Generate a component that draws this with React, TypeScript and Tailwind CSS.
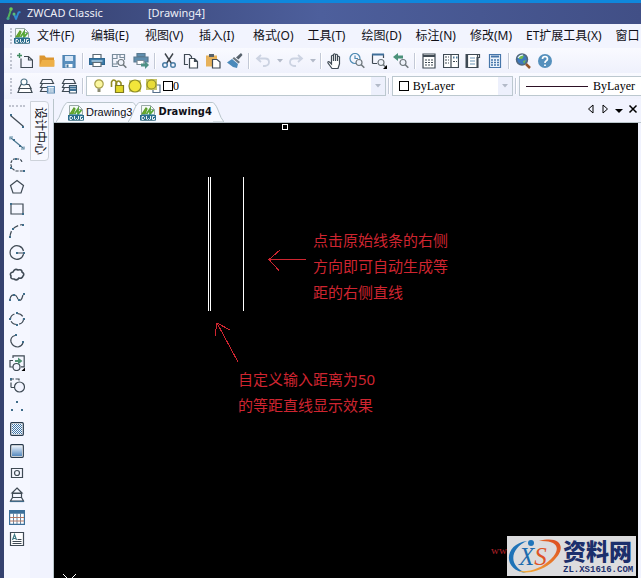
import type { ReactNode } from 'react'

type IconProps = { children: ReactNode; size?: string }

function Icon({ children, size = 'h-4 w-4' }: IconProps) {
  return (
    <svg
      viewBox="0 0 16 16"
      className={`${size} shrink-0`}
      fill="none"
      stroke="#3f4a54"
      strokeWidth="1.2"
      aria-hidden="true"
    >
      {children}
    </svg>
  )
}

function Node({ x, y }: { x: number; y: number }) {
  return <rect x={x - 1} y={y - 1} width="2" height="2" fill="#3f6d8a" stroke="none" />
}

function DwgIcon() {
  return (
    <Icon>
      <path d="M1.5 .5h9l4 4v11h-13z" fill="#f4faf6" stroke="#9aa9a8" strokeWidth="1" />
      <path d="M10.500 .5v4h4" stroke="#9aa9a8" strokeWidth="1" />
      <path d="M2 9 6 3l1 1-2 5z" fill="#6fae2c" stroke="#5c9c2d" />
      <path d="M6.500 9 10 4v5l3.500-4" stroke="#55a636" strokeWidth="1.800" />
      <path d="M2 10h12" stroke="#2d7fa0" />
      <rect x="0" y="10" width="16" height="5.500" fill="#2a6c8c" stroke="none" />
      <path
        d="M2 11.500v3h1.500l1-1v-1l-1-1zM6.500 11v3l1 .5 1-1 1 1 1-.5v-3M14.500 11.500h-2v3h2v-1.500"
        stroke="#fff"
        strokeWidth=".9"
      />
    </Icon>
  )
}

const printer = (
  <>
    <path d="M4 1.500h8v4H4z" fill="#fff" stroke="#5b6a75" />
    <path d="M.5 5.500h15v6H.5z" fill="#3d7ba8" stroke="#2e6791" />
    <path d="M2.500 8h11" stroke="#cfe2ef" />
    <path d="M4 9.500h8v4H4z" fill="#fff" stroke="#5b6a75" />
  </>
)

const glass = (
  <>
    <circle cx="10" cy="9.500" r="3" fill="#eef2fa" stroke="#6f777d" />
    <path d="m12.300 11.800 3 3" stroke="#6f777d" strokeWidth="1.600" />
  </>
)

const corner = <path d="M16 12v4h-4z" fill="#000" stroke="none" />

type Tool = { label: string; icon: ReactNode }

const fileTools: Tool[] = [
  {
    label: '新建',
    icon: (
      <>
        <path d="M4 5.500v9h11.500V7l-4-3.500H7M11.500 3.500V7h4" />
        <path d="M2.500 0v5M0 2.500h5" stroke="#3f8b60" strokeWidth="1.400" />
      </>
    ),
  },
  {
    label: '打开',
    icon: (
      <>
        <path d="M.5 2.500h5l1.500 2h8v9H.5z" fill="#dc9630" stroke="none" />
        <path d="M.5 13.500 3 7h12.500v6.500z" fill="#eeb047" stroke="none" />
      </>
    ),
  },
  {
    label: '保存',
    icon: (
      <>
        <path d="M2 2.500h12v12H2z" fill="#5a8fbd" stroke="#4d83b1" />
        <path d="M4 3h8v5H4z" fill="#d6e6f6" stroke="none" />
        <path d="M4.500 11h7v3.500h-7z" fill="#fff" stroke="none" />
        <path d="M5.500 11.500h2v3h-2z" fill="#47779e" stroke="none" />
      </>
    ),
  },
]

const printTools: Tool[] = [
  { label: '打印', icon: printer },
  {
    label: '打印预览',
    icon: (
      <>
        <path d="M1.500 14V1.500h12V7M1.500 5.500H6v-4M6 8v3H1.500M9 1.500v3h4M1.500 13.500H7" stroke="#7a8d9c" />
        {glass}
      </>
    ),
  },
  {
    label: '发布',
    icon: (
      <>
        <path d="M4 .5h8v3H4zM1 4h14v5H1z" fill="#5f8eae" stroke="#5a7b91" />
        <path d="M4 7.500h7v4H4z" fill="#fff" stroke="#7c8b96" />
        <path d="M8 10.500h4V8l4 4-4 4v-2.500H8z" fill="#4f9185" stroke="none" />
      </>
    ),
  },
]

const editTools: Tool[] = [
  {
    label: '剪切',
    icon: (
      <>
        <path d="m4 .5 6.500 10M12 .5l-6.500 10" stroke="#3d444a" strokeWidth="1.400" />
        <circle cx="4" cy="12" r="2.300" stroke="#4c7ea5" strokeWidth="1.500" />
        <circle cx="12" cy="12" r="2.300" stroke="#4c7ea5" strokeWidth="1.500" />
      </>
    ),
  },
  {
    label: '复制',
    icon: (
      <>
        <path d="M5 11.500H1.500v-10h5l2 2V5" />
        <path d="M6.500 5.500h5l3 3v6.500h-8zM11.500 5.500v3h3" fill="#fff" />
      </>
    ),
  },
  {
    label: '粘贴',
    icon: (
      <>
        <path d="M1 2.500h11v11H1z" fill="#e7b25b" stroke="none" />
        <path d="M4 1h5v3H4z" fill="#56616b" stroke="none" />
        <path d="M7.500 6.500h4.500l3 2.500v6h-7.500z" fill="#fff" />
      </>
    ),
  },
  {
    label: '格式刷',
    icon: (
      <>
        <path d="m14 0 1.500 2-4 4.500L9 4.500z" fill="#56616b" stroke="none" />
        <path d="m7 4 6 5-1.500 1.500-6-5z" fill="#6b7882" stroke="none" />
        <path d="M5 6 0 9.500 6 14l4 1 1-4z" fill="#4b8abb" stroke="none" />
      </>
    ),
  },
]

const undo = <path d="M6 2 2 5.500 6 9M2.500 5.500H10q4 0 4 3.500t-4 4H8" stroke="#ccd3e2" strokeWidth="1.800" />
const redo = <path d="m10 2 4 3.500L10 9m3.500-3.500H6q-4 0-4 3.500t4 4h2" stroke="#ccd3e2" strokeWidth="1.800" />

const viewTools: Tool[] = [
  {
    label: '实时平移',
    icon: (
      <path
        d="M5 15.500 1 10q-.5-2 1.500-1L4.500 11V3q1-1.500 2 0v5V1.500q1-1.500 2 0V8 2q1-1.500 2 0v6V4q1-1.500 2 0v7l-1.500 4.500z"
        fill="#fff"
      />
    ),
  },
  {
    label: '实时缩放',
    icon: (
      <>
        <circle cx="6" cy="5.500" r="5" stroke="#4e8bb4" />
        <path d="M6 2.500v3h3" stroke="#4e8bb4" />
        {glass}
      </>
    ),
  },
  {
    label: '窗口缩放',
    icon: (
      <>
        <path d="M1.500 10.500v-9h11V5M1.500 10.500H6" />
        <path d="M1 1.500h12" stroke="#3f6f9b" strokeWidth="2" />
        {glass}
        {corner}
      </>
    ),
  },
  {
    label: '缩放上一个',
    icon: (
      <>
        <path d="M0 4 5 0v2.500h5v3H5V8z" fill="#4b927a" stroke="none" />
        {glass}
      </>
    ),
  },
]

const paletteTools: Tool[] = [
  {
    label: '特性',
    icon: (
      <>
        <path d="M2 1h12v14H2z" fill="#fff" />
        <path d="M2 3h12" strokeWidth="2" />
        <path d="M4 7h8M4 9.500h8M4 12h8" strokeDasharray="2 1" />
      </>
    ),
  },
  {
    label: '设计中心',
    icon: (
      <>
        <path d="M.5 1.500h15v13H.5zM8 1.500v13" fill="#fff" />
        <path d="M2 4h4M2 7h4M2 10h4M10 8.500h4" strokeDasharray="2 1" />
        <path d="M10 3.500h1.500v2H10zM13 3.500h1.500v2H13z" fill="#4b7899" stroke="none" />
      </>
    ),
  },
  {
    label: '工具选项板',
    icon: (
      <>
        <path d="M2.500 1.500h10v13h-10zM12.500 1.500h2v3h-2" fill="#fff" />
        <path d="M1.500 1v14M12.500 4v11" strokeWidth="2" />
        <path d="M5 5h5M5 8h5M5 11h5" stroke="#6b93b5" />
      </>
    ),
  },
  {
    label: '计算器',
    icon: (
      <>
        <path d="M2.500 1.500h11v13h-11z" fill="#edf4fc" stroke="#4676aa" />
        <path d="M4 3.500h8" stroke="#4676aa" strokeWidth="2" />
        <path d="M4 7h8M4 9.500h8M4 12h8" stroke="#4676aa" strokeWidth="1.500" strokeDasharray="2 1" />
      </>
    ),
  },
]

const helpTools: Tool[] = [
  {
    label: '查找',
    icon: (
      <>
        <circle cx="7" cy="6.500" r="5.500" fill="#3d78bd" stroke="#52687d" strokeWidth="1.500" />
        <path d="M4 3q3-2 5 0L7 6H4zM8 8l3-1-2 4z" fill="#6eb852" stroke="none" />
        <path d="M3 5q2-3 5-3" stroke="#e5f4ff" />
        <path d="m11 11 4 4" stroke="#95542a" strokeWidth="2.500" />
      </>
    ),
  },
  {
    label: '帮助',
    icon: (
      <>
        <circle cx="8" cy="8" r="7" fill="#5590bd" stroke="none" />
        <path d="M5.500 6q0-2.500 2.500-2.500T10.500 6Q10.500 7 9 8 8 8.500 8 10m0 1.500v1.500" stroke="#fff" strokeWidth="1.700" />
      </>
    ),
  },
]

const stack = <path d="M4 6.500h8l2 4H2zM2.500 10.500 1 14.500h14l-1.500-4" fill="#fff" />
const layers = (
  <path d="M3.500 1.500h9l2 4h-13zM3.500 5.500l-2 4H8M3.500 9.500l-2 4H8" />
)

const layerTools: Tool[] = [
  {
    label: '图层特性',
    icon: (
      <>
        {stack}
        <circle cx="7" cy="4" r="3" fill="#fff" stroke="#4d7285" />
      </>
    ),
  },
  {
    label: '图层状态',
    icon: (
      <>
        {layers}
        <path d="M8.500 8.500h7v6.500h-7z" fill="#eaf3fb" stroke="#5d8ab2" />
        <path d="M9 11h6M9 13h6" stroke="#5d8ab2" strokeDasharray="1.500 .7" />
      </>
    ),
  },
  {
    label: '上一个图层',
    icon: (
      <>
        {layers}
        <path d="M8.500 7.500h7v7.500h-7z" fill="#fff" stroke="#3a5467" />
        <path d="M9 9.500h6M9 12h6" stroke="#3d6f95" strokeWidth="1.800" />
      </>
    ),
  },
]

const drawTools: Tool[] = [
  { label: '直线', icon: <><path d="m1.500 2.500 13 11" /><Node x={2} y={2} /><Node x={14} y={14} /></> },
  { label: '构造线', icon: <><path d="m2 3 12 10" stroke="#4b7891" /><path d="M1 4.500V2h3M15 11.500V14h-3" stroke="#5b87a0" /><Node x={5} y={5} /><Node x={11} y={11} /></> },
  { label: '多段线', icon: <><path d="M7 2H5Q1.500 4 2 8t5 6h8M7 2h2q3 0 4 3" strokeDasharray="3 1.200" /><Node x={7} y={2} /><Node x={2} y={11} /><Node x={15} y={14} /></> },
  { label: '正多边形', icon: <path d="m8 1.500 6.500 5-2.500 7.500H4L1.500 6.500z" /> },
  { label: '矩形', icon: <><path d="M2 3h12v10H2z" /><Node x={2} y={3} /><Node x={14} y={13} /></> },
  { label: '圆弧', icon: <><path d="M1 15q0-12 13-13.500" strokeDasharray="7 2" /><Node x={1} y={14} /><Node x={4} y={6} /><Node x={14} y={2} /></> },
  { label: '圆', icon: <><path d="M14.500 9A6.800 6.800 0 1 1 14.500 6M8 8h7" /><Node x={8} y={8} /><Node x={15} y={8} /></> },
  { label: '修订云线', icon: <path d="M4 5q2-4 5-2 4-1 4 2 3 2 1 4-1 3-4 2-2 3-5 1-4 0-3-3-2-3 2-4z" strokeWidth="1.600" /> },
  { label: '样条曲线', icon: <><path d="M1 10q1-5 5-4 1 0 3 4 3 4 5-4" /><Node x={1} y={11} /><Node x={5} y={6} /><Node x={10} y={11} /><Node x={15} y={5} /></> },
  { label: '椭圆', icon: <><ellipse cx="8" cy="8" rx="6.500" ry="5.500" strokeDasharray="7 2" /><Node x={8} y={2} /><Node x={1} y={8} /><Node x={15} y={8} /><Node x={8} y={14} /></> },
  { label: '椭圆弧', icon: <><path d="M6 2.500Q1 4 2 9q2 5 7 5 4-1 5-4" /><Node x={7} y={2} /><Node x={14} y={9} /></> },
  {
    label: '插入块',
    icon: (
      <>
        <path d="M4 3V.8h11.200v11H12M4 5.500H1v6.500h3" />
        <circle cx="7.500" cy="12" r="3.500" fill="#f3f5ff" />
        <path d="M6 5h3V2.500L13.500 6 9 9.500V7H6z" fill="#4f9172" stroke="none" />
        <path d="M16 12.500V16h-3.500z" fill="#000" stroke="none" />
      </>
    ),
  },
  { label: '创建块', icon: <><path d="M2 10.500V2h8v2M2 10.500h3" strokeDasharray="5 1.500" /><circle cx="10.500" cy="10" r="5" fill="#f3f5ff" /><Node x={2} y={2} /></> },
  { label: '点', icon: <><Node x={8} y={3} /><Node x={3} y={11} /><Node x={13} y={11} /></> },
  {
    label: '图案填充',
    icon: (
      <>
        <defs>
          <pattern id="checks" width="2" height="2" patternUnits="userSpaceOnUse">
            <path d="M0 0h1v1H0zM1 1h1v1H1z" fill="#3f75a5" stroke="none" shapeRendering="crispEdges" />
          </pattern>
        </defs>
        <rect x="1.700" y="1.700" width="12.600" height="12.600" rx="1" fill="#f8fbff" stroke="#26384a" />
        <path d="M3 3h10v10H3z" fill="url(#checks)" stroke="none" />
      </>
    ),
  },
  {
    label: '渐变色',
    icon: (
      <>
        <defs>
          <linearGradient id="fade" x2="0" y2="1">
            <stop stopColor="#e8f1fb" />
            <stop offset="1" stopColor="#5689be" />
          </linearGradient>
        </defs>
        <rect x="1.700" y="1.700" width="12.600" height="12.600" rx="1" fill="#fff" stroke="#26384a" />
        <path d="M3 3h10v10H3z" fill="url(#fade)" stroke="none" />
      </>
    ),
  },
  { label: '面域', icon: <><path d="M2.500 3.500h11v9h-11z" /><circle cx="8" cy="8" r="2.500" /></> },
  { label: '区域覆盖', icon: <><path d="m8 1 5 5H3zM3.500 6.500h9v4h-9zM3.500 10.500l-2 3.500h13l-2-3.500" /><path d="M1 14.500h14" stroke="#416b89" /></> },
  {
    label: '表格',
    icon: (
      <>
        <path d="M.6 1.600h14.800v13.800H.6z" fill="#fff" stroke="#3c709a" />
        <path d="M1 3h14" stroke="#3c709a" strokeWidth="3.500" />
        <path d="M4.500 4v11M8 4v11M11.500 4v11" stroke="#6584a0" strokeWidth="1" />
        <path d="M1 8.500h14M1 12h14" stroke="#b57862" strokeWidth="1" />
      </>
    ),
  },
  { label: '多行文字', icon: <><path d="M1.500 1.500h13v13h-13z" fill="#fff" /><path d="m3.500 9 2-5.500 2 5.500M4.500 7.500h2" stroke="#3f7a85" /><path d="M8.500 8.500h4M3.500 10.500h9M3.500 12.500h9" /></> },
]

const menus = [
  '文件(F)',
  '编辑(E)',
  '视图(V)',
  '插入(I)',
  '格式(O)',
  '工具(T)',
  '绘图(D)',
  '标注(N)',
  '修改(M)',
  'ET扩展工具(X)',
]

function ToolButton({ tool }: { tool: Tool }) {
  return (
    <button type="button" aria-label={tool.label} className="flex h-[22px] w-[22px] shrink-0 items-center justify-center">
      <Icon>{tool.icon}</Icon>
    </button>
  )
}

function ToolGroup({ tools }: { tools: Tool[] }) {
  return (
    <>
      {tools.map((tool) => (
        <ToolButton key={tool.label} tool={tool} />
      ))}
    </>
  )
}

function Separator() {
  return <div className="mx-[2px] h-4 w-[2px] shrink-0 border-l border-[#c3c9d6] bg-white" />
}

function Grip() {
  return <div className="ml-[6px] h-4 w-0 shrink-0 border-l-2 border-dotted border-[#c0c4d0]" />
}

function Caret({ color }: { color: string }) {
  return (
    <svg viewBox="0 0 6 4" className="h-1 w-1.5" aria-hidden="true">
      <path d="M0 0h6L3 3.500z" fill={color} />
    </svg>
  )
}

function HistoryButton({ label, icon }: { label: string; icon: ReactNode }) {
  return (
    <>
      <ToolButton tool={{ label, icon }} />
      <button type="button" aria-label={`${label}列表`} className="flex h-[22px] w-[11px] shrink-0 items-center justify-center">
        <Caret color="#b3bac8" />
      </button>
    </>
  )
}

type ComboProps = {
  label: string
  value: string
  className: string
  children: ReactNode
}

function Combo({ label, value, className, children }: ComboProps) {
  return (
    <label className={`flex h-5 items-center border border-[#bcc8cf] bg-white ${className}`}>
      {children}
      <select
        aria-label={label}
        className="h-full min-w-0 flex-1 appearance-none bg-transparent font-['Liberation_Serif','Noto_Sans_CJK_SC',serif] text-xs text-black outline-none"
      >
        <option>{value}</option>
      </select>
      <span className="flex h-full w-3.5 shrink-0 items-center justify-center bg-[#edf0fc]">
        <Caret color="#b3bac8" />
      </span>
    </label>
  )
}

function TabEdge({ side }: { side: 'left' | 'right' }) {
  return (
    <svg viewBox="0 0 12 20" className="h-5 w-3 shrink-0" fill="#f7f9ff" stroke="#b9c5cb" aria-hidden="true">
      {side === 'left' ? <path d="M0 20Q3 17 6 8 9 .5 12 .5V20" /> : <path d="M0 .5Q3 .5 6 8q3 9 6 12H0" />}
      {side === 'left' ? <path d="M12 1v19" stroke="#f7f9ff" strokeWidth="2" /> : <path d="M0 1v19" stroke="#f7f9ff" strokeWidth="2" />}
    </svg>
  )
}

function DrawingTab({ name, active }: { name: string; active?: boolean }) {
  return (
    <button type="button" role="tab" aria-selected={!!active} className={active ? '-ml-4 flex' : 'flex'}>
      <TabEdge side="left" />
      <span className="flex h-5 items-center gap-[2px] border-t border-[#b9c5cb] bg-[#f7f9ff]">
        <DwgIcon />
        <span
          className={
            active
              ? "font-['DejaVu_Sans_Condensed','Open_Sans',sans-serif] text-[11px] font-bold"
              : "font-['Liberation_Sans',sans-serif] text-[11px]"
          }
        >
          {name}
        </span>
      </span>
      <TabEdge side="right" />
    </button>
  )
}

function DrawingCanvas() {
  return (
    <main className="relative min-w-0 flex-1 overflow-hidden bg-black font-['Noto_Sans','Noto_Sans_CJK_SC',sans-serif] text-[15px] leading-[26px] text-[#cf2530]">
      <svg className="absolute left-0 top-0 h-[250px] w-[260px]" fill="none" shapeRendering="crispEdges" aria-hidden="true">
        <path d="M228.500 1.500h5v5h-5z" stroke="#fff" />
        <path d="M154.500 54v134M156.500 54v134M189.500 54v134" stroke="#fff" />
        <path d="M252 136.500h-37M226 127l-11 9.500 10 11" stroke="#cf2530" />
        <path d="m184 239-21-39m-2 13 2-13 13 7" stroke="#cf2530" />
      </svg>
      <p className="absolute left-[259px] top-[104px] w-[136px]">点击原始线条的右侧方向即可自动生成等距的右侧直线</p>
      <p className="absolute left-[184px] top-[243px] whitespace-nowrap">
        自定义输入距离为50
        <br />
        的等距直线显示效果
      </p>
      <svg className="absolute bottom-0 left-2 h-1 w-4" stroke="#fff" aria-hidden="true">
        <path d="m1 0 4 4M14 0l-4 4" />
      </svg>
      <Watermark />
    </main>
  )
}

function Watermark() {
  return (
    <div className="absolute bottom-[2px] right-[2px] flex items-center">
      <span className="-mt-3 font-['Liberation_Serif',serif] text-[11px] leading-4 text-[#b02028]">ww</span>
      <div className="flex h-10 w-[129px] items-center bg-[#dcdcde]">
        <svg viewBox="0 0 56 38" className="h-[38px] w-14 shrink-0" aria-hidden="true">
          <defs>
            <linearGradient id="flame" x1="0" x2="1" y1="1" y2="0">
              <stop stopColor="#f6b23a" />
              <stop offset="1" stopColor="#dc4a20" />
            </linearGradient>
          </defs>
          <path d="M20 4C-3 7-5 33 19 36 0 28 4 11 20 4z" fill="#1e73b8" />
          <path d="M32 4C55-2 61 12 44 26 31 36 17 37 12 34c12 1 23-3 32-12C55 11 50 3 32 4z" fill="url(#flame)" />
          <circle cx="24" cy="6" r="3" fill="#1f75ba" />
          <text x="12" y="28" fontFamily="Liberation Serif" fontSize="25" fontStyle="italic" fill="#1d6cae">
            X<tspan fill="#df5426">S</tspan>
          </text>
        </svg>
        <div className="flex flex-col whitespace-nowrap text-[#1c2f6c]">
          <span className="font-['Noto_Sans_CJK_SC',sans-serif] text-[23px] font-black leading-6">资料网</span>
          <span className="mt-[3px] font-['Liberation_Mono',monospace] text-[9px] font-bold leading-[10px]">ZL.XS1616.COM</span>
        </div>
      </div>
    </div>
  )
}

export default function App() {
  return (
    <div className="flex h-screen flex-col overflow-hidden border-t-[3px] border-[#0f87dc] bg-[#f1f3fe] font-['Noto_Sans','Noto_Sans_CJK_SC',sans-serif] text-xs text-[#101018]">
      <header className="flex h-[21px] shrink-0 items-center bg-linear-to-r from-[#343f6d] via-[#4d5f9c] to-[#414f86] pl-1.5 text-[11px] text-[#eceef6]">
        <svg viewBox="0 0 16 16" className="h-4 w-4" fill="none" aria-hidden="true">
          <path d="M2 12.500 5 3.500" stroke="#55b45a" strokeWidth="2" />
          <circle cx="5" cy="3" r="1.800" fill="#6cc75c" />
          <circle cx="2" cy="12.500" r="1.500" fill="#3fa38c" />
          <path d="m8 8 2 5 2.500-6.500 2-.5" stroke="#2f8bd4" strokeWidth="2" strokeLinejoin="round" />
          <circle cx="8" cy="8" r="1.500" fill="#59bd7b" />
        </svg>
        <h1 className="ml-[5px]">ZWCAD Classic</h1>
        <span className="ml-[45px]">[Drawing4]</span>
      </header>

      <div className="flex min-h-0 flex-1 flex-col border-l-4 border-[#35426f]">
        <nav className="flex h-6 shrink-0 items-center overflow-hidden bg-[#f2f4fe]">
          <Grip />
          <span className="ml-[2px] mr-[7px]">
            <DwgIcon />
          </span>
          {menus.map((menu) => (
            <button key={menu} type="button" className="min-w-[54px] shrink-0 whitespace-nowrap pr-3.5 text-left">
              {menu}
            </button>
          ))}
          <button type="button" className="shrink-0 whitespace-nowrap">
            窗口
          </button>
        </nav>

        <div className="flex h-[25px] shrink-0 items-center overflow-hidden bg-linear-to-b from-[#f9faff] to-[#eff1fc]">
          <Grip />
          <div className="ml-[2px] flex items-center">
            <ToolGroup tools={fileTools} />
            <Separator />
            <ToolGroup tools={printTools} />
            <Separator />
            <ToolGroup tools={editTools} />
            <Separator />
            <HistoryButton label="放弃" icon={undo} />
            <HistoryButton label="重做" icon={redo} />
            <Separator />
            <ToolGroup tools={viewTools} />
            <Separator />
            <ToolGroup tools={paletteTools} />
            <Separator />
            <ToolGroup tools={helpTools} />
          </div>
        </div>

        <div className="flex h-[26px] shrink-0 items-center overflow-hidden bg-linear-to-b from-[#f9faff] to-[#eff1fc]">
          <Grip />
          <div className="ml-[2px] flex min-w-0 flex-1 items-center">
            <ToolGroup tools={layerTools} />
            <Separator />
            <Combo label="图层" value="0" className="min-w-0 flex-[300]">
              <span className="ml-1 mr-[2px] flex gap-[2px]">
                <Icon>
                  <circle cx="8" cy="6" r="4.200" fill="#fbf7a0" stroke="#a8a04a" />
                  <path d="M6.500 10.500h3v3.500h-3z" fill="#8b8b70" stroke="none" />
                </Icon>
                <Icon>
                  <path d="M2.500 9V4q2-4 5 0v3" stroke="#918b24" strokeWidth="1.600" />
                  <path d="M7 8V5q2.500-4 5 0v3" stroke="#918b24" strokeWidth="1.600" />
                  <path d="M6.500 7.500h8v7h-8z" fill="#e2d828" stroke="#7e7a22" />
                </Icon>
                <Icon>
                  <path d="M2 2h12v12H2z" fill="#d8d98c" stroke="none" />
                  <circle cx="8" cy="8" r="6" fill="#f2e63a" stroke="#8e8c26" />
                </Icon>
                <Icon>
                  <path d="M8 7h7v7.500H8z" fill="#fff" stroke="#56708a" />
                  <path d="M1 1h11v11H1z" fill="#c9c76a" stroke="none" />
                  <circle cx="6.500" cy="6.500" r="4.500" fill="#e8dc38" stroke="#8e8c26" />
                </Icon>
              </span>
              <span className="h-2.5 w-2.5 shrink-0 border border-black" />
            </Combo>
            <Separator />
            <Combo label="颜色" value="ByLayer" className="min-w-0 flex-[120]">
              <span className="ml-1.5 mr-1 h-2.5 w-2.5 shrink-0 border border-black" />
            </Combo>
            <Separator />
            <Combo label="线型" value="ByLayer" className="-mr-5 w-[142px] shrink-0">
              <span className="ml-1.5 mr-[5px] h-px w-[62px] shrink-0 bg-[#2c1024]" />
            </Combo>
          </div>
        </div>

        <div className="flex min-h-0 flex-1">
          <aside className="flex w-[26px] shrink-0 flex-col items-center overflow-hidden bg-[#f5f7ff] pt-1.5">
            <div className="mb-[3px] w-4 shrink-0 border-t-2 border-dotted border-[#c0c4d0]" />
            {drawTools.map((tool) => (
              <ToolButton key={tool.label} tool={tool} />
            ))}
          </aside>

          <div className="w-[23px] shrink-0 pt-[2px]">
            <button
              type="button"
              className="flex h-[60px] w-[19px] items-center justify-center rounded-r-sm border border-[#cdd2da] bg-[#f8f9ff] [text-orientation:sideways] [writing-mode:vertical-rl]"
            >
              设计中心
            </button>
          </div>

          <div className="flex min-w-0 flex-1 flex-col border-l border-[#b9c5cb]">
            <div className="flex h-6 shrink-0 items-end border-b border-[#b9c5cb]">
              <div role="tablist" className="flex pl-[2px]">
                <DrawingTab name="Drawing3" />
                <DrawingTab name="Drawing4" active />
              </div>
              <div className="ml-auto flex h-full items-center gap-1 pb-1 pr-[3px]">
                <button type="button" aria-label="上一个">
                  <svg viewBox="0 0 10 10" className="h-2.5 w-2.5" fill="none" stroke="#000">
                    <path d="M7 1v8L2.500 5z" />
                  </svg>
                </button>
                <button type="button" aria-label="下一个">
                  <svg viewBox="0 0 10 10" className="h-2.5 w-2.5" fill="none" stroke="#000">
                    <path d="M3 1v8l4.500-4z" />
                  </svg>
                </button>
                <button type="button" aria-label="图形列表">
                  <svg viewBox="0 0 10 10" className="h-2.5 w-2.5">
                    <path d="M1 5h8L5 9z" />
                  </svg>
                </button>
                <button type="button" aria-label="关闭">
                  <svg viewBox="0 0 10 10" className="h-2.5 w-2.5" stroke="#000" strokeWidth="1.500">
                    <path d="m1.500 1.500 7 7m0-7-7 7" />
                  </svg>
                </button>
              </div>
            </div>
            <div className="flex min-h-0 flex-1 pr-[3px]">
              <DrawingCanvas />
            </div>
          </div>
        </div>
      </div>
    </div>
  )
}
